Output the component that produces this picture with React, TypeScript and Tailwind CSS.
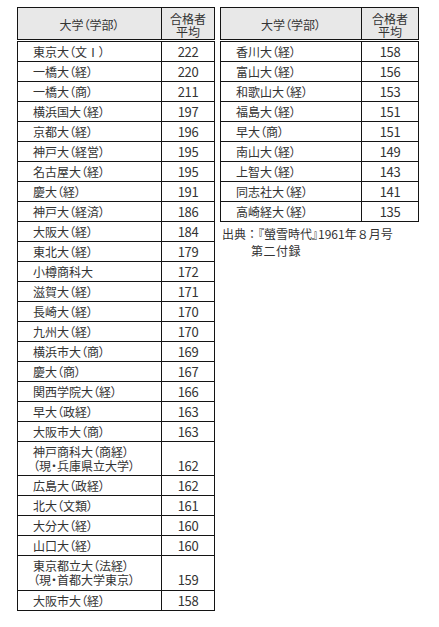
import React from "react";

type Row = { name: string | string[]; num: string; h?: string };

const left: Row[] = [
  { name: "東京大（文Ⅰ）", num: "222" },
  { name: "一橋大（経）", num: "220" },
  { name: "一橋大（商）", num: "211" },
  { name: "横浜国大（経）", num: "197" },
  { name: "京都大（経）", num: "196" },
  { name: "神戸大（経営）", num: "195" },
  { name: "名古屋大（経）", num: "195" },
  { name: "慶大（経）", num: "191" },
  { name: "神戸大（経済）", num: "186" },
  { name: "大阪大（経）", num: "184" },
  { name: "東北大（経）", num: "179" },
  { name: "小樽商科大", num: "172" },
  { name: "滋賀大（経）", num: "171" },
  { name: "長崎大（経）", num: "170" },
  { name: "九州大（経）", num: "170" },
  { name: "横浜市大（商）", num: "169" },
  { name: "慶大（商）", num: "167" },
  { name: "関西学院大（経）", num: "166" },
  { name: "早大（政経）", num: "163" },
  { name: "大阪市大（商）", num: "163" },
  { name: ["神戸商科大（商経）", "（現・兵庫県立大学）"], num: "162", h: "h-[34px]" },
  { name: "広島大（政経）", num: "162" },
  { name: "北大（文類）", num: "161" },
  { name: "大分大（経）", num: "160" },
  { name: "山口大（経）", num: "160" },
  { name: ["東京都立大（法経）", "（現・首都大学東京）"], num: "159", h: "h-[35px]" },
  { name: "大阪市大（経）", num: "158" },
];

const right: Row[] = [
  { name: "香川大（経）", num: "158" },
  { name: "富山大（経）", num: "156" },
  { name: "和歌山大（経）", num: "153" },
  { name: "福島大（経）", num: "151" },
  { name: "早大（商）", num: "151" },
  { name: "南山大（経）", num: "149" },
  { name: "上智大（経）", num: "143" },
  { name: "同志社大（経）", num: "141" },
  { name: "高崎経大（経）", num: "135" },
];

function Table({ rows, cols }: { rows: Row[]; cols: string }) {
  return (
    <div>
      <div className={`grid ${cols} h-[33px] border border-[#141414] bg-[#e8e8e8] mb-[1px] text-[12px]`}>
        <div className="flex items-center justify-center pt-[3px]">大学（学部）</div>
        <div className="flex flex-col items-center justify-center pt-[3px] border-l border-[#141414] leading-[13px]">
          <span>合格者</span>
          <span>平均</span>
        </div>
      </div>
      <div className="border-x border-b border-[#141414]">
        {rows.map((r, i) => {
          const two = Array.isArray(r.name);
          return (
            <div key={i} className={`grid ${cols} border-t border-[#141414] ${r.h ?? "h-[20px]"}`}>
              {two ? (
                <div className="flex flex-col justify-center pl-[15px] text-[12px] leading-[14px]">
                  {(r.name as string[]).map((l, j) => (
                    <span key={j} className="whitespace-nowrap">{l}</span>
                  ))}
                </div>
              ) : (
                <div className="flex items-center pl-[15px] text-[12px] whitespace-nowrap">{r.name}</div>
              )}
              {two ? (
                <div className="flex flex-col justify-center items-center border-l border-[#141414] text-[13px] leading-[14px] tracking-[-0.3px]">
                  <span>&nbsp;</span>
                  <span>{r.num}</span>
                </div>
              ) : (
                <div className="flex items-center justify-center border-l border-[#141414] text-[13px] tracking-[-0.3px]">
                  {r.num}
                </div>
              )}
            </div>
          );
        })}
      </div>
    </div>
  );
}

export default function App() {
  return (
    <div className="bg-white w-[439px] h-[627px] text-[#333] font-['Noto_Sans_CJK_JP','Noto_Sans',sans-serif] [font-feature-settings:'palt'] flex items-start pt-[7px] pl-[17px] gap-[5px]">
      <div className="w-[198px]">
        <Table rows={left} cols="grid-cols-[143px_1fr]" />
      </div>
      <div className="w-[199px]">
        <Table rows={right} cols="grid-cols-[140px_1fr]" />
        <div className="mt-[3px] pl-[2px] text-[12px] leading-[17px] [font-feature-settings:normal]">
          <div className="whitespace-nowrap">
            出典：<span className="[font-feature-settings:'palt']">『螢雪時代』</span>1961年８月号
          </div>
          <div className="pl-[29px] tracking-[0.5px]">第二付録</div>
        </div>
      </div>
    </div>
  );
}
